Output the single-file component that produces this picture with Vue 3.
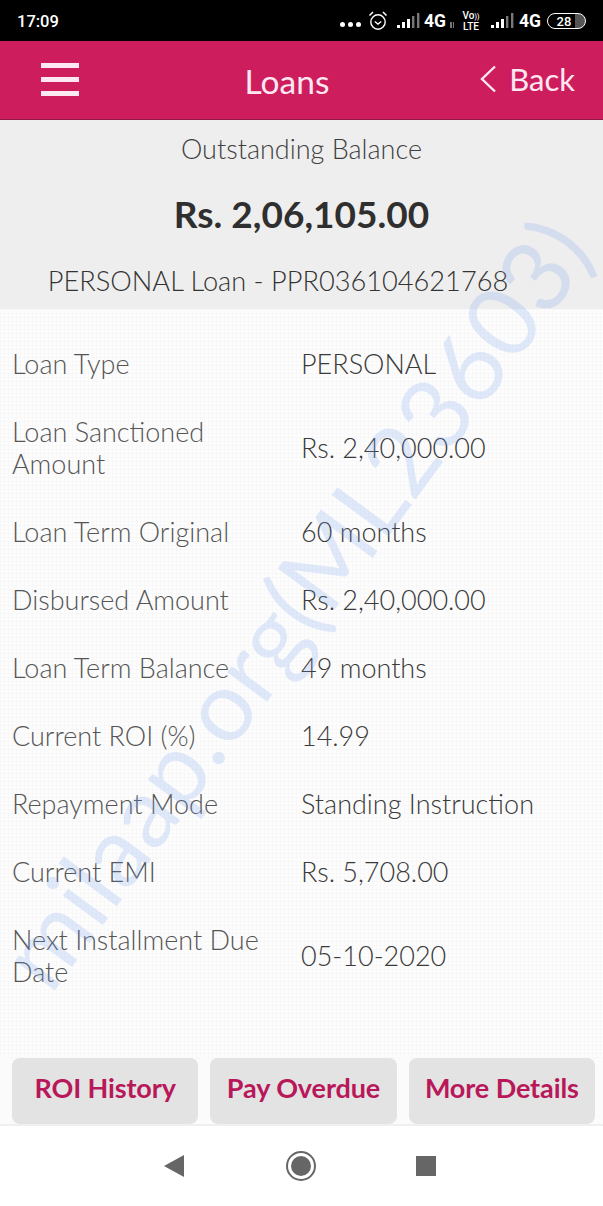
<script setup>
const rows = [
  { label: 'Loan Type', value: 'PERSONAL' },
  { label: 'Loan Sanctioned Amount', value: 'Rs. 2,40,000.00' },
  { label: 'Loan Term Original', value: '60 months' },
  { label: 'Disbursed Amount', value: 'Rs. 2,40,000.00' },
  { label: 'Loan Term Balance', value: '49 months' },
  { label: 'Current ROI (%)', value: '14.99' },
  { label: 'Repayment Mode', value: 'Standing Instruction' },
  { label: 'Current EMI', value: 'Rs. 5,708.00' },
  { label: 'Next Installment Due Date', value: '05-10-2020' },
]
const actions = ['ROI History', 'Pay Overdue', 'More Details']
</script>

<template>
  <div class="screen">
    <div class="status">
      <span class="time">17:09</span>
      <div class="status-right">
        <span class="dots"><i></i><i></i><i></i></span>
        <svg class="alarm" width="20" height="21" viewBox="0 0 20 21" fill="none" stroke="#fff">
          <circle cx="10" cy="12" r="7.200" stroke-width="1.400" />
          <path d="M6.800 11.500l3.200 2.600 3.200-2.600" stroke-width="1.300" />
          <path d="M1.500 5.500L5 2M18.500 5.500L15 2" stroke-width="1.500" />
        </svg>
        <svg class="signal" width="23" height="16" viewBox="0 0 23 16">
          <rect x="0" y="12" width="3" height="3" fill="#fff" />
          <rect x="5" y="9" width="3" height="6" fill="#fff" />
          <rect x="10" y="6" width="3" height="9" fill="#fff" />
          <rect x="15" y="3" width="2.400" height="12" fill="#777" />
          <rect x="20" y="0" width="2.400" height="15" fill="#777" />
        </svg>
        <span class="net">4G</span>
        <span class="arrows"><i></i><i></i></span>
        <span class="volte">Vo<span class="vo-mark">))</span><br />LTE</span>
        <svg class="signal second" width="23" height="16" viewBox="0 0 23 16">
          <rect x="0" y="12" width="3" height="3" fill="#fff" />
          <rect x="5" y="9" width="3" height="6" fill="#fff" />
          <rect x="10" y="6" width="3" height="9" fill="#fff" />
          <rect x="15" y="3" width="2.400" height="12" fill="#777" />
          <rect x="20" y="0" width="2.400" height="15" fill="#777" />
        </svg>
        <span class="net">4G</span>
        <span class="battery"><span class="battery-level">28</span></span>
      </div>
    </div>

    <header class="topbar">
      <button class="menu" aria-label="Menu"><i></i><i></i><i></i></button>
      <h1 class="title">Loans</h1>
      <div class="back">
        <svg width="18" height="30" viewBox="0 0 18 30" fill="none" stroke="#fde8f2" stroke-width="2.400">
          <path d="M16 2.500L3 15 16 27.500" />
        </svg>
        <span>Back</span>
      </div>
    </header>

    <section class="summary">
      <p class="summary-label">Outstanding Balance</p>
      <p class="summary-amount">Rs. 2,06,105.00</p>
      <p class="summary-id">PERSONAL Loan - PPR036104621768</p>
    </section>

    <main class="details">
      <div v-for="row in rows" :key="row.label" class="row">
        <span class="label">{{ row.label }}</span>
        <span class="value">{{ row.value }}</span>
      </div>
    </main>

    <div class="actions">
      <button v-for="a in actions" :key="a" class="action">{{ a }}</button>
    </div>

    <nav class="navbar">
      <svg class="nav-back" width="22" height="24" viewBox="0 0 22 24"><path d="M21 1v22L1 12z" fill="#666" /></svg>
      <svg class="nav-home" width="30" height="32" viewBox="0 0 30 32">
        <circle cx="15" cy="16" r="14" fill="none" stroke="#666" stroke-width="2" />
        <circle cx="15" cy="16" r="10" fill="#666" />
      </svg>
      <span class="recent"></span>
    </nav>

    <div class="watermark">milaap.org(ML23603)</div>
  </div>
</template>

<style scoped>
.screen {
  position: relative;
  width: 603px;
  height: 1206px;
  overflow: hidden;
  display: flex;
  flex-direction: column;
  background-color: #fdfdfd;
  font-family: Lato, "Liberation Sans", sans-serif;
  color: #3f3f3f;
}
.status {
  height: 41px;
  flex: none;
  background: #000;
  color: #fff;
  display: flex;
  align-items: center;
  justify-content: space-between;
  padding: 0 17px;
  box-sizing: border-box;
  font-family: Roboto, sans-serif;
}
.time { font-size: 16.500px; font-weight: 500; margin-top: 2px; }
.status-right { display: flex; align-items: center; margin-top: 1px; }
.dots { display: flex; gap: 3px; margin-right: 7px; margin-top: 6px; }
.dots i { width: 5px; height: 5px; border-radius: 50%; background: #fff; }
.alarm { margin-right: 9px; margin-top: -2px; }
.signal { margin-right: 4px; }
.signal.second { margin-right: 5px; }
.net { font-size: 17.500px; font-weight: 700; line-height: 20px; }
.arrows { display: flex; gap: 1px; align-items: flex-end; width: 6px; height: 7px; margin: 6px 0 0 4px; }
.arrows i { width: 1.500px; height: 6px; background: #777; }
.volte {
  font-size: 10px;
  line-height: 10px;
  font-weight: 500;
  text-align: center;
  width: 20px;
  margin: 0 10px 0 5px;
  white-space: nowrap;
}
.vo-mark { font-size: 7px; }
.battery {
  width: 39px;
  height: 16px;
  margin-left: 6px;
  box-sizing: border-box;
  border: 1.500px solid #fff;
  border-radius: 9px;
  display: flex;
  align-items: center;
  justify-content: center;
  font-size: 13px;
  font-weight: 500;
  background: linear-gradient(90deg, #000 74%, #555 74%);
}
.battery-level { margin-right: 5px; }
.topbar {
  height: 79px;
  flex: none;
  background: #cd1d5d;
  border-bottom: 1px solid #8e1a45;
  box-sizing: border-box;
  display: flex;
  align-items: center;
  justify-content: space-between;
  padding: 0 28px 0 41px;
  position: relative;
  color: #fde8f2;
}
.menu {
  display: flex;
  flex-direction: column;
  gap: 9px;
  padding: 0;
  border: 0;
  background: none;
  width: 38px;
  margin-bottom: 2px;
}
.menu i { display: block; height: 5px; background: #fde8f2; }
.title {
  position: absolute;
  left: 0;
  right: 0;
  top: 20px;
  margin: 0 0 0 -29px;
  text-align: center;
  font-size: 33.500px;
  line-height: 40px;
  font-weight: 400;
  pointer-events: none;
}
.back {
  display: flex;
  align-items: center;
  gap: 12px;
  font-size: 31px;
  line-height: 40px;
  margin-bottom: 3px;
}
.summary {
  height: 189px;
  flex: none;
  background: #eeeeee;
  box-sizing: border-box;
  text-align: center;
  padding-top: 12px;
}
.summary p { margin: 0; }
.summary-label { font-size: 27px; line-height: 34px; font-weight: 300; }
.summary-amount {
  font-size: 37px;
  line-height: 46px;
  font-weight: 700;
  color: #2f2f2f;
  margin-top: 25px !important;
}
.summary-id {
  font-size: 27.200px;
  line-height: 34px;
  font-weight: 300;
  margin-top: 27px !important;
  padding-right: 47px;
  color: #333;
}
.details {
  flex: 1;
  padding-top: 39px;
  min-height: 0;
  background-image:
    repeating-linear-gradient(90deg, #f8f8f8 0 1px, transparent 1px 4px),
    repeating-linear-gradient(0deg, #f8f8f8 0 1px, transparent 1px 4px);
}
.row {
  display: grid;
  grid-template-columns: 289px 1fr;
  align-items: center;
  padding: 0 12px;
  margin-bottom: 36px;
  font-size: 27px;
  line-height: 32px;
  font-weight: 300;
}
.label { color: #555; padding-right: 20px; }
.value { color: #3a3a3a; }
.actions {
  flex: none;
  display: flex;
  gap: 12px;
  padding: 0 8px 0 12px;
  height: 68px;
  border-bottom: 2px solid #f0f0f0;
  box-sizing: border-box;
  background-color: #fbfbfb;
}
.action {
  flex: 1;
  height: 66px;
  padding: 0 0 8px;
  border: 0;
  border-radius: 8px;
  background: #e3e3e3;
  color: #b8185a;
  font-family: inherit;
  font-size: 27px;
  font-weight: 700;
  letter-spacing: -0.100px;
  white-space: nowrap;
}
.navbar {
  height: 80px;
  flex: none;
  background: #fff;
  display: flex;
  align-items: center;
  padding-left: 163px;
}
.nav-home { margin-left: 101px; }
.recent { margin-left: 100px; width: 20px; height: 20px; background: #666; }
.watermark {
  position: absolute;
  left: 293px;
  top: 602px;
  transform: translate(-50%, -50%) rotate(-53.700deg);
  font-size: 98px;
  line-height: 1;
  font-weight: 400;
  white-space: nowrap;
  color: rgba(110, 155, 240, 0.2);
  pointer-events: none;
}
</style>
